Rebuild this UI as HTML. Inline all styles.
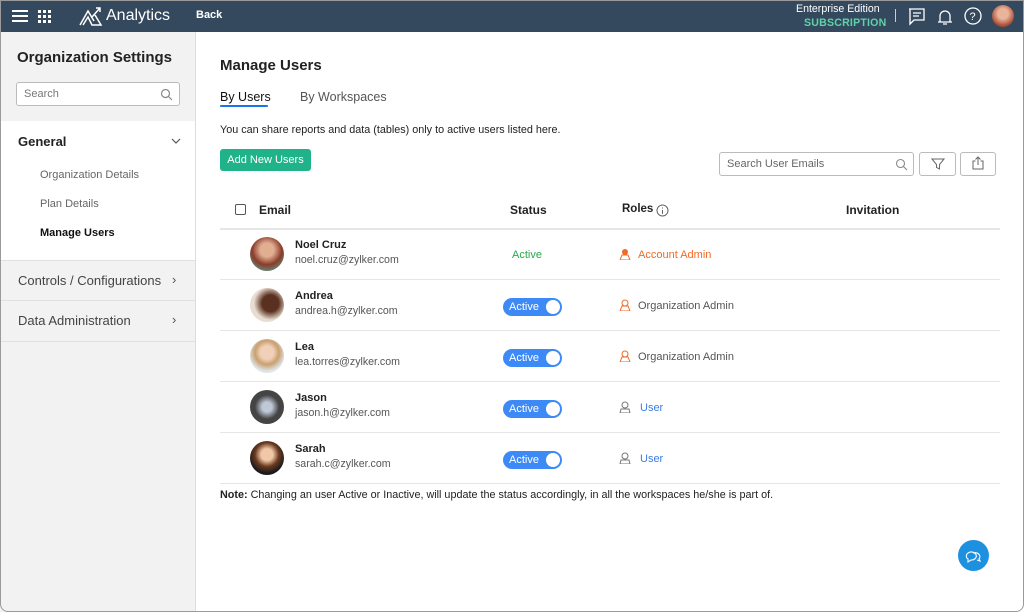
<!DOCTYPE html><html><head><meta charset="utf-8"><style>
*{box-sizing:border-box;margin:0;padding:0}
body{width:1024px;height:612px;overflow:hidden;font-family:"Liberation Sans",sans-serif;background:#fff;position:relative;color:#222}
.a{position:absolute}
.hdr{left:0;top:0;width:1024px;height:32px;background:#34495e}
.side{left:0;top:32px;width:196px;height:580px;background:#f2f2f2;border-right:1px solid #ddd}
.frame{left:0;top:0;width:1024px;height:612px;border:1px solid #9a9a9a;border-radius:0 0 8px 8px;pointer-events:none}
.t{white-space:nowrap}
.av{width:34px;height:34px;border-radius:50%}
.nm{font-size:11px;font-weight:bold;color:#222}
.em{font-size:10.6px;color:#555}
.tg{width:59px;height:18px;border-radius:9px;background:#3d8af7;color:#fff;font-size:11px;line-height:18px;padding-left:6px}
.tg:after{content:"";position:absolute;right:2px;top:2px;width:14px;height:14px;border-radius:50%;background:#fff}
.line{height:1px;background:#e6e6e6;left:220px;width:780px}
</style></head><body>
<div class="a hdr"></div>
<svg class="a" style="left:12px;top:9px" width="42" height="14"><g fill="#fff"><rect x="0" y="1" width="16" height="2"/><rect x="0" y="6" width="16" height="2"/><rect x="0" y="11" width="16" height="2"/>
<rect x="26" y="1" width="3" height="3"/><rect x="31" y="1" width="3" height="3"/><rect x="36" y="1" width="3" height="3"/><rect x="26" y="6" width="3" height="3"/><rect x="31" y="6" width="3" height="3"/><rect x="36" y="6" width="3" height="3"/><rect x="26" y="11" width="3" height="3"/><rect x="31" y="11" width="3" height="3"/><rect x="36" y="11" width="3" height="3"/></g></svg>
<svg class="a" style="left:79px;top:6px" width="24" height="20"><path d="M1 19 L9 5 L15 15 M4 19 L9 11 L13 19 L22 19 L16 9 M13 11 L21 2 M17 2 L21 2 L21 6" stroke="#fff" stroke-width="1.5" fill="none"/></svg>
<div class="a t" style="left:106px;top:7px;font-size:16px;color:#fff">Analytics</div>
<div class="a t" style="left:196px;top:9px;font-size:11px;color:#fff;font-weight:bold">Back</div>
<div class="a t" style="left:796px;top:3px;font-size:10.6px;color:#fff">Enterprise Edition</div>
<div class="a t" style="left:804px;top:17px;font-size:10.6px;color:#5fd3a8;font-weight:bold;letter-spacing:.2px">SUBSCRIPTION</div>
<div class="a" style="left:895px;top:9px;width:1px;height:13px;background:#ccc"></div>
<svg class="a" style="left:908px;top:7px" width="90" height="20" fill="none" stroke="#fff" stroke-width="1.3"><path d="M1 2h15v11H6l-4 4V2z M5 6h8 M5 9h6"/><path d="M30 15h14 M32 15v-6a5 5 0 0 1 10 0v6 M35 17h4"/><circle cx="65" cy="9" r="8"/><text x="61.5" y="13" font-size="11" fill="#fff" stroke="none" font-family="Liberation Sans">?</text></svg>
<div class="a" style="left:992px;top:5px;width:22px;height:22px;border-radius:50%;background:radial-gradient(circle at 50% 40%,#e8b49a 30%,#a84a35 70%)"></div>

<div class="a side"></div>
<div class="a t" style="left:17px;top:49px;font-size:15px;font-weight:bold">Organization Settings</div>
<div class="a" style="left:16px;top:82px;width:164px;height:24px;border:1px solid #bbb;border-radius:3px;background:#fff"></div>
<div class="a t" style="left:24px;top:88px;font-size:11px;color:#777">Search</div>
<svg class="a" style="left:160px;top:88px" width="13" height="13" fill="none" stroke="#888" stroke-width="1.2"><circle cx="5.5" cy="5.5" r="4"/><path d="M8.5 8.5l3.5 3.5"/></svg>
<div class="a" style="left:1px;top:121px;width:194px;height:139px;background:#fff"></div>
<div class="a t" style="left:18px;top:134px;font-size:13px;font-weight:bold">General</div>
<svg class="a" style="left:171px;top:138px" width="10" height="7"><path d="M1 1l4 4 4-4" stroke="#555" fill="none" stroke-width="1.2"/></svg>
<div class="a t" style="left:40px;top:169px;font-size:11px;color:#666">Organization Details</div>
<div class="a t" style="left:40px;top:198px;font-size:11px;color:#666">Plan Details</div>
<div class="a t" style="left:40px;top:227px;font-size:11px;font-weight:bold;color:#111">Manage Users</div>
<div class="a" style="left:1px;top:260px;width:194px;height:1px;background:#e0e0e0"></div>
<div class="a t" style="left:18px;top:273px;font-size:13px;color:#444">Controls / Configurations</div>
<div class="a t" style="left:172px;top:272px;font-size:13px;color:#555">›</div>
<div class="a" style="left:1px;top:300px;width:194px;height:1px;background:#e0e0e0"></div>
<div class="a t" style="left:18px;top:313px;font-size:13px;color:#444">Data Administration</div>
<div class="a t" style="left:172px;top:312px;font-size:13px;color:#555">›</div>
<div class="a" style="left:1px;top:341px;width:194px;height:1px;background:#e0e0e0"></div>

<div class="a t" style="left:220px;top:57px;font-size:15px;font-weight:bold">Manage Users</div>
<div class="a t" style="left:220px;top:90px;font-size:12.5px;color:#111">By Users</div>
<div class="a" style="left:220px;top:105px;width:48px;height:2px;background:#1a73e8;border-radius:1px"></div>
<div class="a t" style="left:300px;top:90px;font-size:12.5px;color:#555">By Workspaces</div>
<div class="a t" style="left:220px;top:124px;font-size:10.8px;color:#222">You can share reports and data (tables) only to active users listed here.</div>
<div class="a" style="left:220px;top:149px;width:91px;height:22px;background:#20b38a;border-radius:3px"></div>
<div class="a t" style="left:220px;top:154px;width:91px;color:#fff;font-size:11px;text-align:center">Add New Users</div>
<div class="a" style="left:719px;top:152px;width:195px;height:24px;border:1px solid #bbb;border-radius:3px"></div>
<div class="a t" style="left:727px;top:158px;font-size:11px;color:#666">Search User Emails</div>
<svg class="a" style="left:895px;top:158px" width="13" height="13" fill="none" stroke="#888" stroke-width="1.1"><circle cx="5.5" cy="5.5" r="4"/><path d="M8.5 8.5l3.5 3.5"/></svg>
<div class="a" style="left:919px;top:152px;width:37px;height:24px;border:1px solid #bbb;border-radius:3px"></div>
<svg class="a" style="left:931px;top:157px" width="14" height="14" fill="none" stroke="#666" stroke-width="1"><path d="M1 2h12L8.5 7.5V12l-3-1.5V7.5z"/></svg>
<div class="a" style="left:960px;top:152px;width:36px;height:24px;border:1px solid #bbb;border-radius:3px"></div>
<svg class="a" style="left:971px;top:156px" width="14" height="14" fill="none" stroke="#666" stroke-width="1"><path d="M4.5 5H2v8h10V5H9.5 M7 9V1 M4.5 3.5L7 1l2.5 2.5"/></svg>

<div class="a" style="left:235px;top:204px;width:11px;height:11px;border:1px solid #555;border-radius:2px"></div>
<div class="a t" style="left:259px;top:203px;font-size:12px;font-weight:bold">Email</div>
<div class="a t" style="left:510px;top:203px;font-size:12px;font-weight:bold">Status</div>
<div class="a t" style="left:622px;top:203px;font-size:11.5px;font-weight:bold">Roles</div>
<svg class="a" style="left:656px;top:204px" width="13" height="13" fill="none" stroke="#666"><circle cx="6.5" cy="6.5" r="5.5"/><path d="M6.5 6v4 M6.5 3.5v1"/></svg>
<div class="a t" style="left:846px;top:203px;font-size:12px;font-weight:bold">Invitation</div>
<div class="a line" style="top:228px;height:2px"></div>

<div class="a av" style="left:250px;top:237px;background:radial-gradient(circle at 50% 38%,#e2ae92 25%,#8a3b2a 55%,#6a7a6a 75%)"></div>
<div class="a t nm" style="left:295px;top:239px">Noel Cruz</div><div class="a t em" style="left:295px;top:254px">noel.cruz@zylker.com</div>
<div class="a t" style="left:512px;top:249px;font-size:11px;color:#2aa84a">Active</div>
<svg class="a" style="left:619px;top:248px" width="12" height="12" fill="#f06a25"><circle cx="6" cy="4" r="3"/><path d="M1 12l2-5h6l2 5z" fill="none" stroke="#f06a25"/></svg>
<div class="a t" style="left:638px;top:249px;font-size:11px;color:#f06a25">Account Admin</div>
<div class="a line" style="top:279px"></div>

<div class="a av" style="left:250px;top:288px;background:radial-gradient(circle at 60% 45%,#5a3020 30%,#e8ddd0 60%)"></div>
<div class="a t nm" style="left:295px;top:290px">Andrea</div><div class="a t em" style="left:295px;top:305px">andrea.h@zylker.com</div>
<div class="a t tg" style="left:503px;top:298px">Active</div>
<svg class="a" style="left:619px;top:299px" width="12" height="12" fill="none" stroke="#f06a25"><circle cx="6" cy="4" r="3"/><path d="M1 12l2-5h6l2 5z"/></svg>
<div class="a t" style="left:638px;top:300px;font-size:11px;color:#555">Organization Admin</div>
<div class="a line" style="top:330px"></div>

<div class="a av" style="left:250px;top:339px;background:radial-gradient(circle at 50% 40%,#f0d0b8 25%,#c9a070 45%,#dfe6ea 70%)"></div>
<div class="a t nm" style="left:295px;top:341px">Lea</div><div class="a t em" style="left:295px;top:356px">lea.torres@zylker.com</div>
<div class="a t tg" style="left:503px;top:349px">Active</div>
<svg class="a" style="left:619px;top:350px" width="12" height="12" fill="none" stroke="#f06a25"><circle cx="6" cy="4" r="3"/><path d="M1 12l2-5h6l2 5z"/></svg>
<div class="a t" style="left:638px;top:351px;font-size:11px;color:#555">Organization Admin</div>
<div class="a line" style="top:381px"></div>

<div class="a av" style="left:250px;top:390px;background:radial-gradient(circle at 50% 50%,#c0c8d8 20%,#444 50%)"></div>
<div class="a t nm" style="left:295px;top:392px">Jason</div><div class="a t em" style="left:295px;top:407px">jason.h@zylker.com</div>
<div class="a t tg" style="left:503px;top:400px">Active</div>
<svg class="a" style="left:619px;top:401px" width="12" height="12" fill="none" stroke="#777"><circle cx="6" cy="4" r="3"/><path d="M1 12l1-4h8l1 4z"/></svg>
<div class="a t" style="left:640px;top:402px;font-size:11px;color:#3a7de0">User</div>
<div class="a line" style="top:432px"></div>

<div class="a av" style="left:250px;top:441px;background:radial-gradient(circle at 50% 40%,#f0c8a8 22%,#6a3a20 45%,#1a1a1a 70%)"></div>
<div class="a t nm" style="left:295px;top:443px">Sarah</div><div class="a t em" style="left:295px;top:458px">sarah.c@zylker.com</div>
<div class="a t tg" style="left:503px;top:451px">Active</div>
<svg class="a" style="left:619px;top:452px" width="12" height="12" fill="none" stroke="#777"><circle cx="6" cy="4" r="3"/><path d="M1 12l1-4h8l1 4z"/></svg>
<div class="a t" style="left:640px;top:453px;font-size:11px;color:#3a7de0">User</div>
<div class="a line" style="top:483px"></div>

<div class="a t" style="left:220px;top:489px;font-size:10.8px;color:#222"><b>Note:</b> Changing an user Active or Inactive, will update the status accordingly, in all the workspaces he/she is part of.</div>

<div class="a" style="left:958px;top:540px;width:31px;height:31px;border-radius:50%;background:#1e90e0"></div>
<svg class="a" style="left:965px;top:547px" width="17" height="17" fill="none" stroke="#fff" stroke-width="1.1"><path d="M3 12a5 4 0 1 1 3 1l-3 2z M8 6a5 4 0 0 1 6 6l1 2-3-1"/></svg>
<div class="a frame"></div>
</body></html>
